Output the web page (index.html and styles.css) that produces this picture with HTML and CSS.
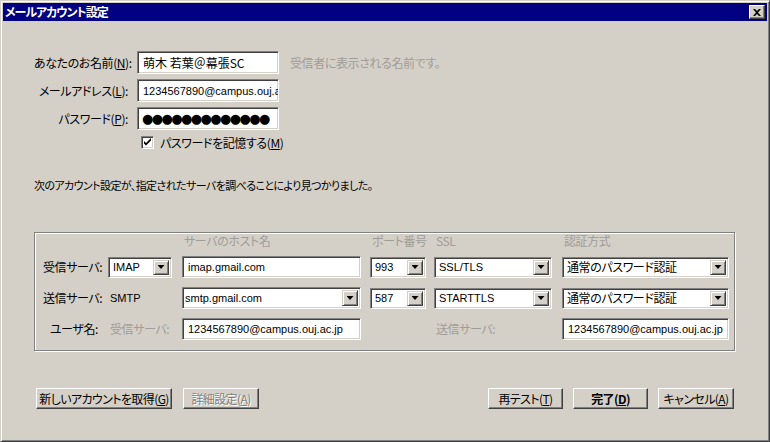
FILE: index.html
```html
<!DOCTYPE html>
<html lang="ja">
<head>
<meta charset="utf-8">
<title>メールアカウント設定</title>
<link rel="stylesheet" href="styles.css">
</head>
<body>
<div class="window">
  <div class="titlebar">
    <span class="title">メールアカウント設定</span>
    <span class="close"><svg width="8" height="7" viewBox="0 0 8 7"><path d="M0 0h2l2 2 2-2h2L5 3.5 8 7H6L4 5 2 7H0l3-3.5z" fill="#000"/></svg></span>
  </div>
  <div class="content">
    <div class="form">
      <label class="lbl">あなたのお名前(<u>N</u>):</label>
      <div class="field jp">萌木 若葉＠幕張SC</div>
      <span class="hint">受信者に表示される名前です。</span>

      <label class="lbl">メールアドレス(<u>L</u>):</label>
      <div class="field latin">1234567890@campus.ouj.a</div>
      <span></span>

      <label class="lbl">パスワード(<u>P</u>):</label>
      <div class="field pw">●●●●●●●●●●●●●</div>
      <span></span>

      <div class="check-row">
        <span class="checkbox"><svg width="9" height="9" viewBox="0 0 9 9"><path d="M1 3l2 2 5-5v2.5L3 7.5 1 5.5z" fill="#000"/></svg></span>
        <span>パスワードを記憶する(<u>M</u>)</span>
      </div>
    </div>

    <p class="notice">次のアカウント設定が、指定されたサーバを調べることにより見つかりました。</p>

    <div class="group">
      <div class="grid">
        <span></span><span></span>
        <span class="head">サーバのホスト名</span>
        <span class="head">ポート番号</span>
        <span class="head">SSL</span>
        <span class="head">認証方式</span>

        <span class="rlabel">受信サーバ:</span>
        <div class="sel w64"><span class="val latin">IMAP</span><span class="arr"></span></div>
        <div class="field latin host">imap.gmail.com</div>
        <div class="sel w56"><span class="val latin">993</span><span class="arr"></span></div>
        <div class="sel w118"><span class="val latin">SSL/TLS</span><span class="arr"></span></div>
        <div class="sel w167"><span class="val">通常のパスワード認証</span><span class="arr"></span></div>

        <span class="rlabel">送信サーバ:</span>
        <span class="plain latin">SMTP</span>
        <div class="sel w179 combo"><span class="val latin">smtp.gmail.com</span><span class="arr"></span></div>
        <div class="sel w56"><span class="val latin">587</span><span class="arr"></span></div>
        <div class="sel w118"><span class="val latin">STARTTLS</span><span class="arr"></span></div>
        <div class="sel w167"><span class="val">通常のパスワード認証</span><span class="arr"></span></div>

        <span class="rlabel right">ユーザ名:</span>
        <span class="plain gray">受信サーバ:</span>
        <div class="field latin host">1234567890@campus.ouj.ac.jp</div>
        <span></span>
        <span class="plain gray">送信サーバ:</span>
        <div class="field latin w167f">1234567890@campus.ouj.ac.jp</div>
      </div>
    </div>

    <div class="buttons">
      <div class="btn-group first">
        <button class="btn w136">新しいアカウントを取得(<u>G</u>)</button>
        <button class="btn w76 disabled" disabled>詳細設定(<u>A</u>)</button>
      </div>
      <div class="btn-group">
        <button class="btn w75">再テスト(<u>T</u>)</button>
        <button class="btn w75 bold">完了(<u>D</u>)</button>
        <button class="btn w76">キャンセル(<u>A</u>)</button>
      </div>
    </div>
  </div>
</div>
</body>
</html>
```

FILE: styles.css
```css
html, body {
  margin: 0;
  padding: 0;
  background: #d4d0c8;
}

body {
  font-family: "Noto Sans CJK JP", "Liberation Sans", sans-serif;
  font-size: 12px;
  line-height: 14px;
  letter-spacing: -0.4px;
  font-feature-settings: "palt";
  color: #000;
}

u { text-decoration: underline; text-underline-offset: 1px; }

.window {
  width: 770px;
  height: 442px;
  box-sizing: border-box;
  border: 1px solid;
  border-color: #d4d0c8 #404040 #404040 #d4d0c8;
  box-shadow: inset 1px 1px #fff, inset -1px -1px #808080;
  padding: 2px;
  background: #d4d0c8;
}

.titlebar {
  height: 18px;
  background: #000080;
  color: #fff;
  display: flex;
  align-items: center;
  justify-content: space-between;
  padding: 0 2px 0 2px;
}

.title {
  font-weight: bold;
  font-size: 12px;
  letter-spacing: -1px;
}

.close {
  width: 16px;
  height: 14px;
  box-sizing: border-box;
  background: #d4d0c8;
  border: 1px solid;
  border-color: #fff #404040 #404040 #fff;
  box-shadow: inset -1px -1px #808080;
  display: flex;
  align-items: center;
  justify-content: center;
}

.content {
  padding: 30px 32px 0 31px;
}

.form {
  display: grid;
  grid-template-columns: 94px 142px auto;
  grid-template-rows: 23px 23px 23px 14px;
  column-gap: 9px;
  row-gap: 5px;
}

.lbl {
  text-align: right;
  align-self: center;
  white-space: nowrap;
}

.hint {
  align-self: center;
  margin-left: 2px;
  color: #a09c98;
}

.field {
  box-sizing: border-box;
  height: 23px;
  background: #fff;
  border: 1px solid;
  border-color: #808080 #fff #fff #808080;
  box-shadow: inset 1px 1px #404040, inset -1px -1px #d4d0c8;
  padding: 0 3px 0 5px;
  display: flex;
  align-items: center;
  white-space: nowrap;
  overflow: hidden;
}

.latin {
  font-family: "Liberation Sans", "Noto Sans CJK JP", sans-serif;
  font-size: 11px;
  letter-spacing: 0;
  font-feature-settings: normal;
}

.jp { font-size: 12px; letter-spacing: 0; }

.pw {
  font-family: "DejaVu Sans", sans-serif;
  font-size: 13px;
  letter-spacing: -1.6px;
  padding-left: 4px;
}

.check-row {
  grid-column: 2 / 4;
  display: flex;
  align-items: center;
  gap: 6px;
  margin-left: 4px;
  margin-top: 1px;
  height: 13px;
}

.checkbox {
  width: 13px;
  height: 13px;
  box-sizing: border-box;
  background: #fff;
  border: 1px solid;
  border-color: #808080 #fff #fff #808080;
  box-shadow: inset 1px 1px #404040, inset -1px -1px #d4d0c8;
  display: flex;
  align-items: center;
  justify-content: center;
}

.notice {
  margin: 29px 0 0 0;
  font-size: 11px;
  letter-spacing: -0.6px;
}

.group {
  margin-top: 40px;
  width: 701px;
  box-sizing: border-box;
  border: 1px solid #808080;
  box-shadow: inset 1px 1px #fff, 1px 1px #fff;
  padding: 2px 0 10px 8px;
}

.grid {
  display: grid;
  grid-template-columns: 65px 74px 188px 64px 128px 167px;
  grid-template-rows: 12px 22px 22px 22px;
  row-gap: 9px;
  align-items: center;
}

.head {
  color: #a09c98;
  padding-left: 2px;
  line-height: 12px;
}

.rlabel { white-space: nowrap; }
.rlabel.right { text-align: right; padding-right: 10px; }

.plain { padding-left: 2px; white-space: nowrap; }
.gray { color: #a09c98; }

.host { width: 179px; height: 22px; padding-left: 5px; }
.w167f { width: 167px; height: 22px; padding-left: 5px; }

.sel {
  box-sizing: border-box;
  height: 21px;
  background: #fff;
  border: 1px solid;
  border-color: #808080 #fff #fff #808080;
  box-shadow: inset 1px 1px #404040, inset -1px -1px #d4d0c8;
  padding: 2px;
  display: flex;
  align-items: stretch;
}

.sel .val {
  flex: 1;
  display: flex;
  align-items: center;
  padding-left: 2px;
  white-space: nowrap;
  overflow: hidden;
}

.combo .val { padding-left: 0; }

.arr {
  width: 16px;
  box-sizing: border-box;
  background: #d4d0c8;
  border: 1px solid;
  border-color: #d4d0c8 #404040 #404040 #d4d0c8;
  box-shadow: inset 1px 1px #fff, inset -1px -1px #808080;
  display: flex;
  align-items: center;
  justify-content: center;
}

.arr::after {
  content: "";
  width: 7px;
  height: 4px;
  background: #000;
  clip-path: polygon(0 0, 100% 0, 50% 100%);
}

.w64 { width: 64px; }
.w56 { width: 56px; }
.w118 { width: 118px; }
.w167 { width: 167px; }
.w179 { width: 179px; height: 22px; }

.buttons {
  margin-top: 37px;
  display: flex;
  justify-content: space-between;
  padding-left: 2px;
  padding-right: 1px;
}

.btn-group {
  display: flex;
  gap: 10px;
}

.btn-group.first { gap: 11px; }

.btn {
  height: 21px;
  box-sizing: border-box;
  background: #d4d0c8;
  border: 1px solid;
  border-color: #fff #404040 #404040 #fff;
  box-shadow: inset -1px -1px #808080;
  font: inherit;
  letter-spacing: -0.6px;
  font-feature-settings: "palt";
  color: #000;
  padding: 0;
  display: flex;
  align-items: center;
  justify-content: center;
  white-space: nowrap;
}

.btn.bold { font-weight: bold; }

.btn.disabled {
  color: #808080;
  text-shadow: 1px 1px #fff;
}

.w136 { width: 136px; }
.w76 { width: 76px; }
.w75 { width: 75px; }
```
